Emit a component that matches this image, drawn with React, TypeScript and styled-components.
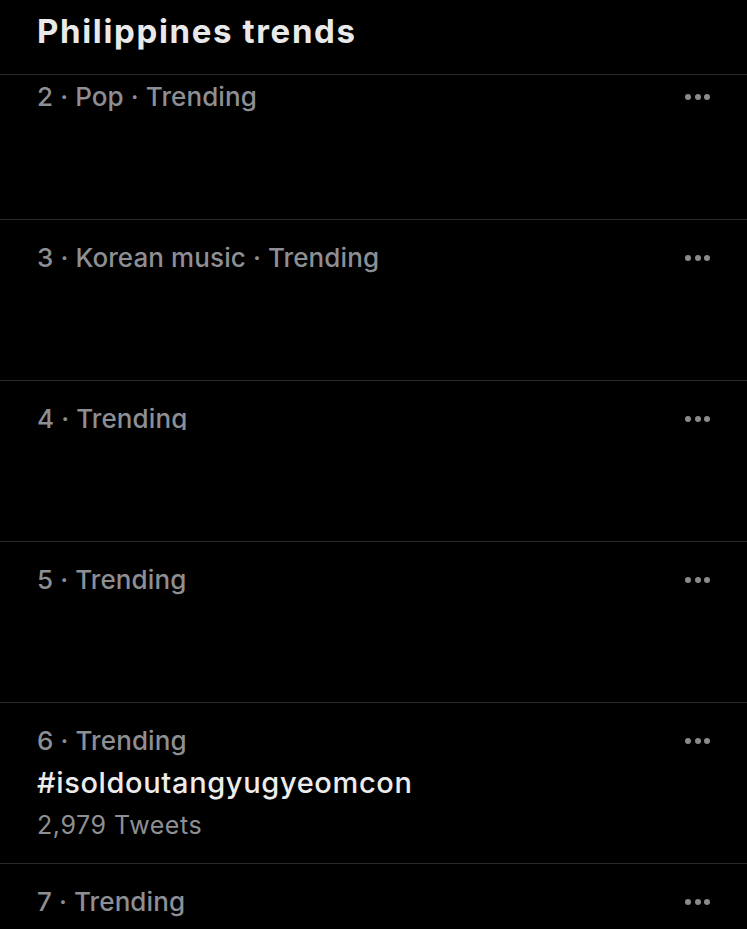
import styled, { createGlobalStyle } from "styled-components";

const GlobalStyle = createGlobalStyle`
  html, body {
    margin: 0;
    padding: 0;
    background: #000;
  }
  body {
    font-family: Inter, "Noto Sans", "Liberation Sans", sans-serif;
  }
`;

const Page = styled.div`
  width: 747px;
  height: 929px;
  background: #000;
  overflow: hidden;
`;

const Header = styled.div`
  height: 74px;
  padding: 11px 37px 0;
  box-sizing: border-box;
`;

const Title = styled.h1`
  margin: 0;
  font-size: 33px;
  line-height: 40px;
  font-weight: 700;
  color: #e9e9ea;
  letter-spacing: 1.65px;
`;

const Row = styled.div<{ $top: number; $height: number }>`
  border-top: 1px solid #2a2a2c;
  height: ${(p) => p.$height}px;
  padding: ${(p) => p.$top}px 37px 0;
  box-sizing: border-box;
`;

const TopLine = styled.div`
  display: flex;
  align-items: center;
  justify-content: space-between;
  height: 36px;
`;

const Meta = styled.span<{ $clip?: boolean }>`
  display: inline-block;
  font-size: 26px;
  line-height: 36px;
  font-weight: 500;
  color: #8d8f94;
  letter-spacing: 0.1px;
  overflow: hidden;
  height: ${(p) => (p.$clip ? "29px" : "36px")};
  align-self: flex-start;
`;

const Dot = styled.span`
  width: 6px;
  height: 6px;
  border-radius: 50%;
  background: #8a8a8c;
`;

const Dots = styled.div`
  display: flex;
  gap: 3.5px;
`;

const Hashtag = styled.div`
  font-size: 29px;
  line-height: 48px;
  font-weight: 500;
  color: #ececec;
  letter-spacing: 0.65px;
`;

const Count = styled.div`
  font-size: 25px;
  line-height: 36px;
  color: #8d8f94;
  letter-spacing: 0.55px;
`;

interface Trend {
  meta: string;
  top: number;
  height: number;
  clip?: boolean;
  tag?: string;
  count?: string;
}

const trends: Trend[] = [
  { meta: "2 · Pop · Trending", top: 4, height: 145 },
  { meta: "3 · Korean music · Trending", top: 20, height: 161 },
  { meta: "4 · Trending", top: 20, height: 161, clip: true },
  { meta: "5 · Trending", top: 20, height: 161 },
  {
    meta: "6 · Trending",
    top: 20,
    height: 161,
    tag: "#isoldoutangyugyeomcon",
    count: "2,979 Tweets",
  },
  { meta: "7 · Trending", top: 20, height: 161 },
];

export default function App() {
  return (
    <Page>
      <GlobalStyle />
      <Header>
        <Title>Philippines trends</Title>
      </Header>
      {trends.map((t) => (
        <Row key={t.meta} $top={t.top} $height={t.height}>
          <TopLine>
            <Meta $clip={t.clip}>{t.meta}</Meta>
            <Dots>
              <Dot />
              <Dot />
              <Dot />
            </Dots>
          </TopLine>
          {t.tag && <Hashtag>{t.tag}</Hashtag>}
          {t.count && <Count>{t.count}</Count>}
        </Row>
      ))}
    </Page>
  );
}
